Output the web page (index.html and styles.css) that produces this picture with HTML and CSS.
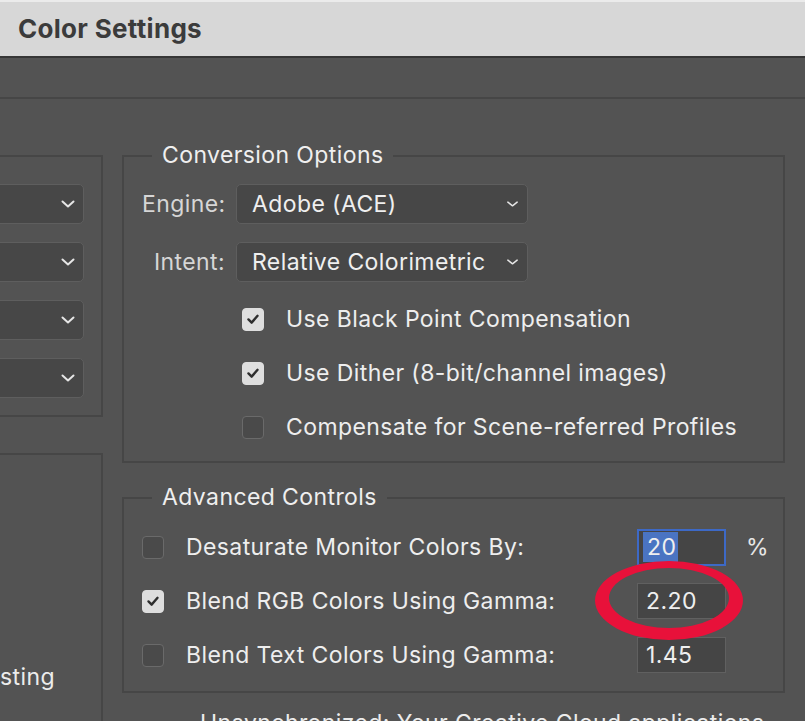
FILE: index.html
```html
<!DOCTYPE html>
<html lang="en">
<head>
<meta charset="utf-8">
<title>Color Settings</title>
<link rel="stylesheet" href="styles.css">
</head>
<body>
<div class="window">
  <header class="titlebar"><h1 class="title">Color Settings</h1></header>
  <div class="toolbar"></div>
  <main class="content">
    <div class="left-col">
      <section class="panel panel-spaces">
        <div class="select wide"><span class="select-text"></span><svg class="chev" viewBox="0 0 14 8"><path d="M1.5 1.5 L7 6.5 L12.5 1.5"/></svg></div>
        <div class="select wide"><span class="select-text"></span><svg class="chev" viewBox="0 0 14 8"><path d="M1.5 1.5 L7 6.5 L12.5 1.5"/></svg></div>
        <div class="select wide"><span class="select-text"></span><svg class="chev" viewBox="0 0 14 8"><path d="M1.5 1.5 L7 6.5 L12.5 1.5"/></svg></div>
        <div class="select wide"><span class="select-text"></span><svg class="chev" viewBox="0 0 14 8"><path d="M1.5 1.5 L7 6.5 L12.5 1.5"/></svg></div>
      </section>
      <section class="panel panel-policies">
        <p class="policy-line">Ask When Pasting</p>
      </section>
    </div>
    <div class="right-col">
      <section class="group group-conv">
        <span class="legend">Conversion Options</span>
        <div class="form-grid">
          <label class="field-label">Engine:</label>
          <div class="select"><span class="select-text">Adobe (ACE)</span><svg class="chev small" viewBox="0 0 14 8"><path d="M2 2 L7 6 L12 2"/></svg></div>
          <label class="field-label">Intent:</label>
          <div class="select"><span class="select-text">Relative Colorimetric</span><svg class="chev small" viewBox="0 0 14 8"><path d="M2 2 L7 6 L12 2"/></svg></div>
        </div>
        <ul class="check-list">
          <li class="check-row"><span class="cb checked"><svg viewBox="0 0 22 22"><path d="M6 11.5 L9.5 15 L16 7.5"/></svg></span><span class="cb-label">Use Black Point Compensation</span></li>
          <li class="check-row"><span class="cb checked"><svg viewBox="0 0 22 22"><path d="M6 11.5 L9.5 15 L16 7.5"/></svg></span><span class="cb-label">Use Dither (8-bit/channel images)</span></li>
          <li class="check-row"><span class="cb"></span><span class="cb-label">Compensate for Scene-referred Profiles</span></li>
        </ul>
      </section>
      <section class="group group-adv">
        <span class="legend">Advanced Controls</span>
        <div class="adv-grid">
          <span class="cb"></span>
          <span class="cb-label">Desaturate Monitor Colors By:</span>
          <span class="num focused"><span class="sel">20</span></span>
          <span class="unit">%</span>

          <span class="cb checked"><svg viewBox="0 0 22 22"><path d="M6 11.5 L9.5 15 L16 7.5"/></svg></span>
          <span class="cb-label">Blend RGB Colors Using Gamma:</span>
          <span class="num">2.20</span>
          <span class="unit"></span>

          <span class="cb"></span>
          <span class="cb-label">Blend Text Colors Using Gamma:</span>
          <span class="num">1.45</span>
          <span class="unit"></span>
        </div>
      </section>
      <p class="sync">Unsynchronized: Your Creative Cloud applications</p>
    </div>
  </main>
  <svg class="annotation" viewBox="0 0 160 90" aria-hidden="true">
    <path fill-rule="evenodd" d="M5 44.5 A74 39.5 0 1 0 153 44.5 A74 39.5 0 1 0 5 44.5 Z M19 42 A60 30 0 1 1 139 42 A60 30 0 1 1 19 42 Z"/>
  </svg>
</div>
</body>
</html>
```
FILE: styles.css
```css
* { box-sizing: border-box; }

html, body {
  margin: 0;
  padding: 0;
  background: #535353;
  overflow: hidden;
}

body {
  font-family: "Inter", "Liberation Sans", sans-serif;
  color: #ececec;
  width: 805px;
  height: 721px;
  letter-spacing: 0.4px;
}

.window {
  position: relative;
  width: 805px;
  height: 721px;
  overflow: hidden;
}

.titlebar {
  height: 58px;
  background: #d7d7d7;
  border-top: 2px solid #ebebeb;
  border-bottom: 2px solid #363636;
  display: flex;
  align-items: center;
  padding-left: 18px;
}

.title {
  margin: 0;
  margin-top: -2px;
  font-size: 26px;
  font-weight: 700;
  color: #3b3b3b;
  letter-spacing: 0.3px;
}

.toolbar {
  height: 41px;
  border-bottom: 2px solid #464646;
}

.content {
  display: flex;
  align-items: flex-start;
  padding-top: 56px;
}

.left-col {
  width: 403px;
  margin-left: -300px;
  flex: none;
  display: flex;
  flex-direction: column;
  gap: 36px;
}

.panel {
  border: 2px solid #464646;
}

.panel-spaces {
  height: 262px;
  padding: 27px 17px 0 40px;
  display: flex;
  flex-direction: column;
  gap: 18px;
}

.panel-policies {
  height: 320px;
  padding-top: 208px;
  padding-right: 46px;
}

.policy-line {
  margin: 0;
  text-align: right;
  white-space: nowrap;
  font-size: 23px;
  line-height: 28px;
  color: #ececec;
}

.select {
  height: 40px;
  background: #474747;
  border: 1.5px solid #5e5e5e;
  border-radius: 5px;
  display: flex;
  align-items: center;
  padding: 0 8px 0 15px;
  font-size: 23px;
  color: #efefef;
}

.select-text {
  flex: 1;
  white-space: nowrap;
  overflow: hidden;
}

.chev {
  width: 14px;
  height: 8px;
  flex: none;
  fill: none;
  stroke: #e6e6e6;
  stroke-width: 2;
  stroke-linecap: round;
  stroke-linejoin: round;
}

.chev.small {
  width: 13px;
  stroke-width: 1.6;
}

.right-col {
  width: 663px;
  margin-left: 19px;
  flex: none;
  display: flex;
  flex-direction: column;
}

.group {
  position: relative;
  border: 2px solid #464646;
}

.legend {
  position: absolute;
  top: -16px;
  left: 28px;
  padding: 0 10px;
  background: #535353;
  font-size: 23px;
  line-height: 28px;
  color: #efefef;
}

.group-conv {
  height: 308px;
  padding: 27px 0 0 18px;
}

.form-grid {
  display: grid;
  grid-template-columns: 83px 292px;
  column-gap: 11px;
  row-gap: 18px;
}

.field-label {
  align-self: center;
  text-align: right;
  font-size: 23px;
  color: #d6d6d6;
  white-space: nowrap;
}

.check-list {
  list-style: none;
  margin: 10px 0 0 100px;
  padding: 0;
}

.check-row {
  height: 54px;
  display: flex;
  align-items: center;
  gap: 22px;
}

.cb {
  width: 22px;
  height: 23px;
  flex: none;
  border-radius: 4px;
  border: 1.5px solid #6a6a6a;
  background: #4a4a4a;
  display: flex;
  align-items: center;
  justify-content: center;
}

.cb.checked {
  background: #dedede;
  border-color: #dedede;
}

.cb svg {
  width: 22px;
  height: 22px;
  fill: none;
  stroke: #2e2e2e;
  stroke-width: 2.6;
  stroke-linecap: round;
  stroke-linejoin: round;
}

.cb-label {
  font-size: 23px;
  color: #eeeeee;
  white-space: nowrap;
}

.group-adv {
  margin-top: 34px;
  height: 196px;
  padding: 21px 0 9px 18px;
}

.adv-grid {
  display: grid;
  grid-template-columns: 22px 429px 89px auto;
  grid-auto-rows: 54px;
  column-gap: 22px;
  align-items: center;
}

.num {
  height: 36px;
  background: #454545;
  border: 1.5px solid #606060;
  display: flex;
  align-items: center;
  padding-left: 8px;
  font-size: 23px;
  color: #efefef;
}

.num.focused {
  height: 37px;
  border: 2px solid #3d69c6;
  padding-left: 4px;
}

.sel {
  background: #4a74c2;
  padding: 1px 2px 1px 4px;
  line-height: 28px;
}

.unit {
  font-size: 23px;
  color: #e6e6e6;
  margin-left: -2px;
}

.sync {
  margin: 16px 0 0 78px;
  font-size: 23px;
  line-height: 28px;
  color: #ececec;
  white-space: nowrap;
}

.annotation {
  position: absolute;
  left: 590px;
  top: 556px;
  width: 160px;
  height: 90px;
  fill: #e8113a;
}
```
